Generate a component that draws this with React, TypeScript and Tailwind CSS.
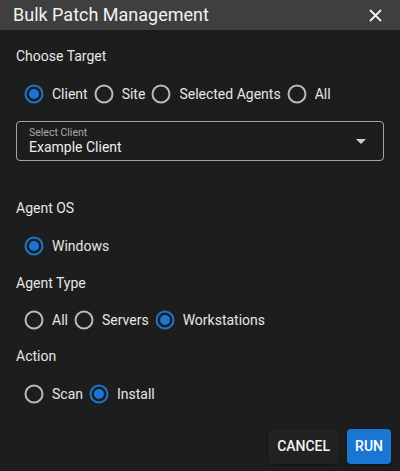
type RadioProps = { label: string; checked?: boolean }

function Radio({ label, checked = false }: RadioProps) {
  return (
    <div className="flex items-center gap-2 h-5">
      <svg width="20" height="20" viewBox="0 0 20 20" className="shrink-0">
        <circle cx="10" cy="10" r="8.5" fill="none" stroke={checked ? '#1976d2' : 'rgba(255,255,255,0.7)'} strokeWidth="2" />
        {checked && <circle cx="10" cy="10" r="5" fill="#1976d2" />}
      </svg>
      <span className="text-[14px] text-[#e6e6e6]">{label}</span>
    </div>
  )
}

function RadioGroup({ items, value }: { items: string[]; value: string }) {
  return (
    <div className="flex items-center gap-[6px] pl-2">
      {items.map((item) => (
        <Radio key={item} label={item} checked={item === value} />
      ))}
    </div>
  )
}

export default function App() {
  return (
    <div className="w-[400px] h-[471px] bg-[#1d1d1d] text-white flex flex-col font-['Roboto',sans-serif]">
      {/* Header */}
      <div className="h-[30px] bg-[#3f3f3f] flex items-center justify-between pl-[13px] pr-[18px]">
        <h1 className="text-[18px] leading-none text-[#f2f2f2]">Bulk Patch Management</h1>
        <svg width="13" height="13" viewBox="0 0 13 13">
          <path d="M1 1 L12 12 M12 1 L1 12" stroke="#f2f2f2" strokeWidth="1.8" />
        </svg>
      </div>

      {/* Body */}
      <div className="flex flex-col px-4">
        <div className="mt-[18px] text-[14px] leading-4 text-[#e6e6e6]">Choose Target</div>
        <div className="mt-[20px]">
          <RadioGroup items={['Client', 'Site', 'Selected Agents', 'All']} value="Client" />
        </div>

        <div className="mt-[17px] h-[40px] rounded border border-[rgba(255,255,255,0.6)] flex items-center justify-between pl-3 pr-[17px]">
          <div className="flex flex-col">
            <span className="text-[10.5px] leading-3 text-[#a8a8a8]">Select Client</span>
            <span className="text-[14px] leading-4 text-[#ededed]">Example Client</span>
          </div>
          <svg width="10" height="5" viewBox="0 0 10 5">
            <path d="M0 0 L10 0 L5 5 Z" fill="#cfcfcf" />
          </svg>
        </div>

        <div className="mt-[39px] text-[14px] leading-4 text-[#e6e6e6]">Agent OS</div>
        <div className="mt-[20px]">
          <RadioGroup items={['Windows']} value="Windows" />
        </div>

        <div className="mt-[19px] text-[14px] leading-4 text-[#e6e6e6]">Agent Type</div>
        <div className="mt-[19px]">
          <RadioGroup items={['All', 'Servers', 'Workstations']} value="Workstations" />
        </div>

        <div className="mt-[18px] text-[14px] leading-4 text-[#e6e6e6]">Action</div>
        <div className="mt-[20px]">
          <RadioGroup items={['Scan', 'Install']} value="Install" />
        </div>
      </div>

      {/* Actions */}
      <div className="flex justify-end gap-2 pr-[9px] mt-[25px]">
        <button className="h-[35px] px-[9px] rounded bg-[#222222] text-[14px] font-medium uppercase text-[#f2f2f2] shadow-[0_1px_3px_rgba(0,0,0,0.4)]">
          Cancel
        </button>
        <button className="h-[35px] px-[8px] rounded bg-[#1976d2] text-[14px] font-medium uppercase text-white shadow-[0_1px_3px_rgba(0,0,0,0.4)]">
          Run
        </button>
      </div>
    </div>
  )
}
